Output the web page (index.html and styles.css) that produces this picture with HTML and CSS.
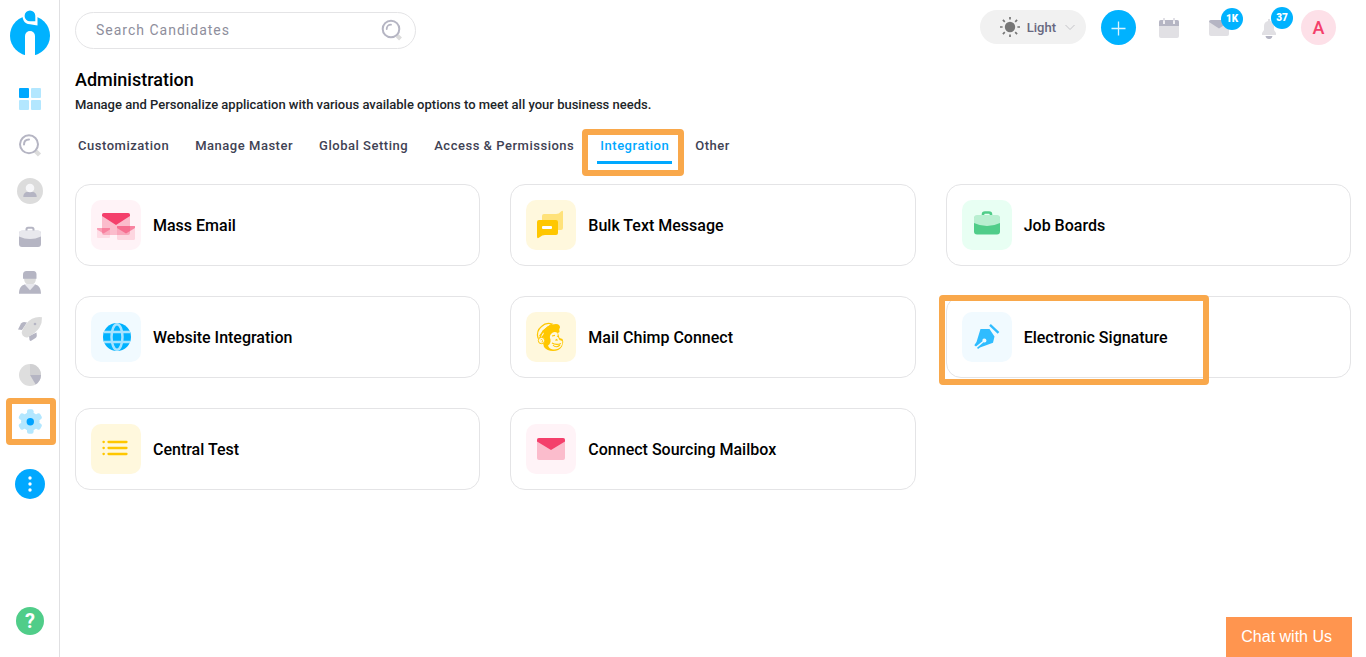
FILE: index.html
```html
<!DOCTYPE html>
<html lang="en">
<head>
<meta charset="utf-8">
<meta name="viewport" content="width=device-width, initial-scale=1">
<title>Administration</title>
<link rel="stylesheet" href="styles.css">
</head>
<body>
<div class="app">
  <aside class="sidebar">
    <a class="logo" href="#" aria-label="Home">
      <svg width="40" height="46" viewBox="0 0 40 46"><circle cx="20" cy="25.7" r="20" fill="#00b2ff"/><path d="M12 0C12 10 14 14 20 14.300L27.500 15.500V0Z" fill="#fff"/><path d="M20 .5a5.300 5.300 0 0 1 5.300 5.300V11.300H20A5.400 5.400 0 0 1 20 .5Z" fill="#00b2ff"/><path d="M15 46V26a5 5 0 0 1 10 0V46Z" fill="#fff"/></svg>
    </a>
    <nav class="nav" aria-label="Main">
      <a class="nav-item" href="#" aria-label="Dashboard"><svg width="30" height="30" viewBox="0 0 30 30"><rect x="4" y="4" width="10" height="10" rx="1" fill="#00a8ff"/><g fill="#b3e7ff"><rect x="16" y="4" width="10" height="10" rx="1"/><rect x="4" y="16" width="10" height="10" rx="1"/><rect x="16" y="16" width="10" height="10" rx="1"/></g></svg></a>
      <a class="nav-item" href="#" aria-label="Search"><svg width="30" height="30" viewBox="0 0 30 30" fill="none"><path d="M20.500 21l4 4" stroke="#dcdcdc" stroke-width="4.500"/><circle cx="14" cy="14.300" r="9" stroke="#b5b5c3" stroke-width="2"/><path d="M9 14.500c0-3 2-5 5-5" stroke="#b5b5c3" stroke-width="2" stroke-linecap="round"/></svg></a>
      <a class="nav-item" href="#" aria-label="Candidates"><svg width="30" height="30" viewBox="0 0 30 30"><circle cx="15" cy="15" r="13" fill="#dcdcdc"/><path d="M8.300 21c0-3.500 2-5 4-5h5.400c2 0 4 1.500 4 5Z" fill="#b5b5c3"/><circle cx="15" cy="12" r="4.300" fill="#f7f7f9"/></svg></a>
      <a class="nav-item" href="#" aria-label="Jobs"><svg width="30" height="30" viewBox="0 0 30 30"><path d="M11.500 9V7.300q0-1.500 1.500-1.500h4q1.500 0 1.500 1.500V9" fill="none" stroke="#b5b5c3" stroke-width="2"/><rect x="4" y="8.700" width="22" height="16.300" rx="3" fill="#b5b5c3"/><path d="M4 14.500V11.500q0-3 3-3h16q3 0 3 3v3q-5.500 2.500-11 2.500T4 14.500Z" fill="#e8e8ed"/></svg></a>
      <a class="nav-item" href="#" aria-label="Contacts"><svg width="30" height="30" viewBox="0 0 30 30"><path d="M9 10h12q0 7-6 7t-6-7Z" fill="#dcdcdc"/><path d="M8 10.700V6.500Q8 3 11.500 3h7q3 0 3 3.500v4.200Z" fill="#b5b5c3"/><path d="M9.500 16h11l-1 4-4.500 3-4.500-3Z" fill="#e8e8ed"/><path d="M4 25.700c0-5 2-8.500 5.700-9.200L15 22.200l5.300-5.700C24 17.200 26 20.700 26 25.700Z" fill="#b5b5c3"/></svg></a>
      <a class="nav-item" href="#" aria-label="Campaigns"><svg width="30" height="30" viewBox="0 0 30 30"><path d="M3 15.500l3-6Q7 8 9 8l3 .5L7 16Z" fill="#b5b5c3"/><path d="M14 22l7.500-3.500.3 3q0 1.500-1.300 2.500l-4.700 3Q15 27 14.500 26Z" fill="#b5b5c3"/><path d="M7 17Q11 8 17 4.700 21.500 2.500 27 3.200 27.300 9 24.500 13.500 21 19 12.500 23.500 10 24 7.700 21.500 6 19 7 17Z" fill="#dcdcdc"/><circle cx="20" cy="10" r="1.300" fill="#b5b5c3"/></svg></a>
      <a class="nav-item" href="#" aria-label="Reports"><svg width="30" height="30" viewBox="0 0 30 30"><circle cx="15" cy="15" r="11" fill="#dedede"/><path d="M15 15V4A11 11 0 0 1 26 15Z" fill="#d0d0d2"/><path d="M15 15H26A11 11 0 0 1 20.700 24.400Z" fill="#b5b5c3"/></svg></a>
      <a class="nav-item nav-current" href="#" aria-label="Administration" aria-current="page"><svg width="30" height="30" viewBox="0 0 30 30"><g fill="#b3e7ff"><circle cx="15.300" cy="15.500" r="9.300"/><rect x="12" y="3.200" width="6.600" height="24.600" rx="2"/><rect x="12" y="3.200" width="6.600" height="24.600" rx="2" transform="rotate(60 15.300 15.500)"/><rect x="12" y="3.200" width="6.600" height="24.600" rx="2" transform="rotate(120 15.300 15.500)"/></g><circle cx="15.300" cy="15.700" r="3.700" fill="#00a3ff"/></svg><span class="marker marker-nav"></span></a>
    </nav>
    <button class="more" type="button" aria-label="More"><svg width="30" height="30" viewBox="0 0 30 30" fill="#fff"><circle cx="15" cy="9" r="1.700"/><circle cx="15" cy="15" r="1.700"/><circle cx="15" cy="21" r="1.700"/></svg></button>
    <button class="help" type="button">?</button>
  </aside>

  <main class="main">
    <header class="topbar">
      <form class="search">
        <input class="search-input" type="text" placeholder="Search Candidates" aria-label="Search Candidates">
        <button class="search-button" type="button" aria-label="Search"><svg width="22" height="22" viewBox="0 0 22 22" fill="none"><path d="M16 16.500l3.500 3.500" stroke="#dcdcdc" stroke-width="4"/><circle cx="10" cy="10" r="8.300" stroke="#b5b5c3" stroke-width="2"/><path d="M5.700 10c0-2.500 1.800-4.300 4.300-4.300" stroke="#b5b5c3" stroke-width="1.800" stroke-linecap="round"/></svg></button>
      </form>
      <div class="tools">
        <button class="theme" type="button"><svg width="20" height="20" viewBox="0 0 20 20" stroke="#777" stroke-width="1.700"><circle cx="10" cy="10" r="5.200" fill="#777" stroke="none"/><path d="M10 0v2.600M10 17.400V20M0 10h2.600M17.400 10H20M2.900 2.900l1.900 1.900M15.200 15.200l1.900 1.900M2.900 17.100l1.900-1.900M15.200 4.800l1.900-1.900"/></svg><span class="theme-name">Light</span><svg width="10" height="10" viewBox="0 0 10 10" fill="none" stroke="#c4c4c8"><path d="M.5 3L5 7.500 9.500 3"/></svg></button>
        <button class="tool tool-add" type="button" aria-label="Add"><svg width="35" height="35" viewBox="0 0 35 35" stroke="#d9f3ff" stroke-width="1.300"><path d="M17.500 11.500v14M10.500 18.500h14"/></svg></button>
        <button class="tool" type="button" aria-label="Calendar"><svg width="35" height="35" viewBox="0 0 35 35"><rect x="8" y="10" width="20" height="18" rx="2" fill="#e1e0e4"/><path d="M8 16v-4q0-2 2-2h16q2 0 2 2v4Z" fill="#b5b5c3"/><path d="M13 8v6M23 8v6" stroke="#f0eff2" stroke-width="2"/><path d="M13 8v3M23 8v3" stroke="#dcdce2" stroke-width="1.500"/></svg></button>
        <button class="tool" type="button" aria-label="Messages"><svg width="35" height="35" viewBox="0 0 35 35"><rect x="8" y="10" width="20" height="16" rx="2" fill="#e1e0e4"/><path d="M8 12q0-2 2-2h16q2 0 2 2l-10 6.500Z" fill="#b5b5c3"/></svg><span class="badge">1K</span></button>
        <button class="tool" type="button" aria-label="Notifications"><svg width="35" height="35" viewBox="0 0 35 35"><path d="M14.500 26h7q-.5 3-3.500 3t-3.500-3Z" fill="#b5b5c3"/><path d="M17 11V9h2v2q4 1 4 5v4l2 3v2H11v-2l2-3v-4q0-4 4-5Z" fill="#e1e0e4"/></svg><span class="badge badge-high">37</span></button>
        <button class="tool avatar" type="button">A</button>
      </div>
    </header>

    <h1 class="title">Administration</h1>
    <p class="intro">Manage and Personalize application with various available options to meet all your business needs.</p>

    <nav class="tabs" aria-label="Administration sections">
      <a class="tab" href="#">Customization</a>
      <a class="tab" href="#">Manage Master</a>
      <a class="tab" href="#">Global Setting</a>
      <a class="tab" href="#">Access &amp; Permissions</a>
      <a class="tab tab-active" href="#" aria-current="page">Integration<span class="marker marker-tab"></span></a>
      <a class="tab" href="#">Other</a>
    </nav>

    <section class="cards">
      <a class="card" href="#"><span class="tile pink"><svg width="50" height="50" viewBox="0 0 50 50"><rect x="11" y="13" width="28" height="22" rx="2" fill="#fbbccc"/><path d="M11 15q0-2 2-2h24q2 0 2 2v1l-14 9-14-9Z" fill="#f43f6b"/><g fill="#f43f6b"><rect x="6" y="28" width="13" height="10" rx="1" fill-opacity=".12"/><path d="M6 28h13v1.500L12.500 33.500 6 29.500Z" fill-opacity=".4"/><rect x="26" y="26" width="18" height="14" rx="1.500" fill-opacity=".16"/><path d="M26 26h18v2l-9 5.500-9-5.500Z" fill-opacity=".55"/></g></svg></span><span class="card-name">Mass Email</span></a>
      <a class="card" href="#"><span class="tile yellow"><svg width="50" height="50" viewBox="0 0 50 50"><path d="M18 14h12q3 0 5-2.500Q37 10 37 12v16q0 2-2 2H18q-2 0-2-2V16q0-2 2-2Z" fill="#ffe27a"/><path d="M13 20h17q2 0 2 2v11q0 2-2 2H19q-3 0-5 2-3 2.500-3-.5V22q0-2 2-2Z" fill="#ffc700"/><rect x="16" y="26" width="10" height="3" rx="1" fill="#fff"/></svg></span><span class="card-name">Bulk Text Message</span></a>
      <a class="card" href="#"><span class="tile green"><svg width="50" height="50" viewBox="0 0 50 50"><path d="M21 16v-1.500q0-2 2-2h4q2 0 2 2V16" fill="none" stroke="#50cd89" stroke-width="2.600"/><rect x="12" y="16" width="26" height="18.500" rx="3" fill="#50cd89"/><path d="M12 23v-5q0-3 3-3h20q3 0 3 3v5q-6 3-13 3t-13-3Z" fill="#b9efd1"/></svg></span><span class="card-name">Job Boards</span></a>
      <a class="card" href="#"><span class="tile blue"><svg width="50" height="50" viewBox="0 0 50 50"><circle cx="26" cy="25" r="14" fill="#00b2ff"/><g fill="none" stroke="#a6e3ff" stroke-width="2.500"><path d="M13 20h26M13 30h26"/><ellipse cx="26" cy="25" rx="5.500" ry="12.800"/></g></svg></span><span class="card-name">Website Integration</span></a>
      <a class="card" href="#"><span class="tile yellow"><svg width="50" height="50" viewBox="0 0 50 50"><path d="M17 23l3-5 8-4 5 1 .5 5-1.500 1 1.500 5 3 1 .8 3-1.300 4.500Q33 39 27 39q-6 0-9-4l-1-4-3 1-1-4Z" fill="#ffc700"/><path d="M12 26Q10 19 15.500 14.500 20 10 26 12l-9 7-3.500 7.500Z" fill="#fff8dd" stroke="#ffc700" stroke-width="1.200"/><path d="M17 20Q22 12 30 12q4 0 4 3.500-.5 2.500-5 2.500-6-.5-10.500 5Z" fill="#ffc700"/><path d="M13.500 24q3-4 9-9.500" fill="none" stroke="#ffc700" stroke-width="1.200"/><circle cx="15.500" cy="28.500" r="3.200" fill="#fff8dd" stroke="#ffc700"/><path d="M14.500 28q1.500-1.500 2 .5t-1 1.500" fill="none" stroke="#ffc700" stroke-width=".8"/><path d="M25 22q3-3.500 6.500-1l.5 4 1.500 3 2.800 1q.5 3-1.300 5.500-3 3.500-8 3-4-.5-5-4 3-2 2.500-6-1.500-3 .5-5.500Z" fill="#fff8dd"/><path d="M26 24l3-.6M31 24l1 .5M29.500 28.500l1-1 1 1M26 31q4 2.500 9 .5M27 33q3 3.500 7 0" fill="none" stroke="#ffc700" stroke-width="1.100"/></svg></span><span class="card-name">Mail Chimp Connect</span></a>
      <a class="card" href="#"><span class="tile blue"><svg width="50" height="50" viewBox="0 0 50 50"><path d="M18.500 17h9l5 7.500-1.500 6.300L18 35.500 16 37l-1-1.200 6.500-5.500q2.800.7 3-1.800-.2-2-2.200-2-2.300.3-1.800 2.700L14 34.500l-1.700-1.300 2.200-3.200Z" fill="#2fbcff"/><path d="M28 12.800l8.500 8" stroke="#2fbcff" stroke-width="2.400"/></svg></span><span class="card-name">Electronic Signature</span><span class="marker marker-card"></span></a>
      <a class="card" href="#"><span class="tile yellow"><svg width="50" height="50" viewBox="0 0 50 50" stroke="#ffc700" stroke-width="2.300" stroke-linecap="round"><path d="M12.500 18h.3M12.500 24h.3M12.500 30h.3M17.500 18h18M17.500 24h18M17.500 30h18"/></svg></span><span class="card-name">Central Test</span></a>
      <a class="card" href="#"><span class="tile pink"><svg width="50" height="50" viewBox="0 0 50 50"><rect x="11" y="14" width="28" height="22" rx="2" fill="#fbbccc"/><path d="M11 16q0-2 2-2h24q2 0 2 2v1.500L25 26 11 17.500Z" fill="#f43f6b"/></svg></span><span class="card-name">Connect Sourcing Mailbox</span></a>
    </section>
  </main>
</div>
<button class="chat" type="button">Chat with Us</button>
</body>
</html>
```
FILE: styles.css
```css
* {
  box-sizing: border-box;
}

body {
  margin: 0;
  background: #fff;
  color: #000;
  font-family: Roboto, "Noto Sans", sans-serif;
}

a {
  color: inherit;
  text-decoration: none;
}

button {
  margin: 0;
  padding: 0;
  border: 0;
  background: none;
  font-family: inherit;
}

svg {
  display: block;
  flex: none;
}

.app {
  display: flex;
  min-height: 100vh;
}

/* Sidebar */

.sidebar {
  display: flex;
  flex: none;
  flex-direction: column;
  align-items: center;
  width: 60px;
  padding: 10px 0 22px 1px;
  border-right: 1px solid #e0e0e2;
}

.nav {
  display: flex;
  flex-direction: column;
  margin-top: 20px;
}

.nav-item {
  display: flex;
  align-items: center;
  height: 46px;
}

.more {
  margin-top: 25px;
  border-radius: 50%;
  background: #00a8ff;
}

.help {
  width: 28px;
  height: 28px;
  margin-top: auto;
  border-radius: 50%;
  background: #50cd89;
  color: #fff;
  font-size: 20px;
  font-weight: 700;
  line-height: 28px;
}

/* Highlight frames */

.nav-current,
.tab-active,
.card {
  position: relative;
}

.marker {
  position: absolute;
  border: 6px solid #f9a84b;
  border-radius: 4px;
  pointer-events: none;
}

.marker-nav {
  inset: 0 -11px -1px -9px;
}

.marker-tab {
  inset: -9px -12px -15px -15px;
}

.marker-card {
  top: -2px;
  bottom: -8px;
  left: -8px;
  width: 270px;
}

/* Top bar */

.main {
  flex: 1;
  min-width: 0;
  padding: 10px 15px;
}

.topbar {
  display: flex;
  align-items: flex-start;
  justify-content: space-between;
  padding-right: 15px;
}

.search {
  display: flex;
  align-items: center;
  width: 341px;
  margin-top: 2px;
  padding: 0 12px 2px 20px;
  border: 1px solid #e4e4e6;
  border-radius: 20px;
}

.search-input {
  flex: 1;
  min-width: 0;
  height: 33px;
  padding: 0;
  border: 0;
  outline: 0;
  background: none;
  color: #3f4254;
  font: 14px Roboto, sans-serif;
  letter-spacing: 1px;
}

.search-input::placeholder {
  color: #8e8e9c;
}

.tools {
  display: flex;
  gap: 15px;
}

.theme {
  display: flex;
  align-items: center;
  gap: 7px;
  height: 34px;
  padding: 0 11px 0 20px;
  border-radius: 17px;
  background: #f1f1f1;
  color: #686880;
  font-size: 13px;
  font-weight: 500;
}

.theme-name {
  margin-right: 2px;
}

.tool {
  position: relative;
  width: 35px;
  height: 35px;
  border-radius: 50%;
}

.tool-add {
  background: #00b2ff;
}

.avatar {
  background: #fde0e8;
  color: #f43f6b;
  font-size: 18px;
  font-weight: 500;
}

.badge {
  position: absolute;
  top: -2px;
  left: 20px;
  width: 22px;
  height: 22px;
  border-radius: 50%;
  background: #00b2ff;
  color: #fff;
  font-size: 10px;
  font-weight: 900;
  line-height: 22px;
  text-align: center;
}

.badge-high {
  top: -3px;
}

/* Page heading */

.title {
  margin: 19px 0 0;
  font-size: 18px;
  font-weight: 500;
  line-height: 24px;
}

.intro {
  margin: 3px 0 0;
  color: #212529;
  font-size: 13px;
  font-weight: 500;
  line-height: 20px;
}

.tabs {
  display: flex;
  gap: 20px;
  margin-top: 23px;
}

.tab {
  padding: 0 3px 7px;
  border-bottom: 3px solid transparent;
  color: #3f4254;
  font-size: 13px;
  font-weight: 500;
  letter-spacing: 0.04em;
  line-height: 16px;
}

.tab-active {
  border-bottom-color: #00a8ff;
  color: #00a8ff;
}

/* Cards */

.cards {
  display: grid;
  grid-template-columns: repeat(3, minmax(0, 1fr));
  gap: 30px;
  margin-top: 20px;
}

.card {
  display: flex;
  align-items: center;
  gap: 12px;
  padding: 15px;
  border: 1px solid #e4e4e6;
  border-radius: 15px;
}

.tile {
  flex: none;
  border-radius: 10px;
}

.pink {
  background: #fff3f7;
}

.yellow {
  background: #fff8dd;
}

.green {
  background: #e8fff3;
}

.blue {
  background: #f1faff;
}

.card-name {
  padding-top: 2px;
  font-size: 16px;
  font-weight: 500;
  line-height: 24px;
}

/* Chat launcher */

.chat {
  position: fixed;
  right: 14px;
  bottom: 0;
  height: 40px;
  padding: 0 20px 0 15px;
  background: #ff954f;
  color: #fff;
  font-family: "Liberation Sans", Arial, sans-serif;
  font-size: 16px;
}
```
